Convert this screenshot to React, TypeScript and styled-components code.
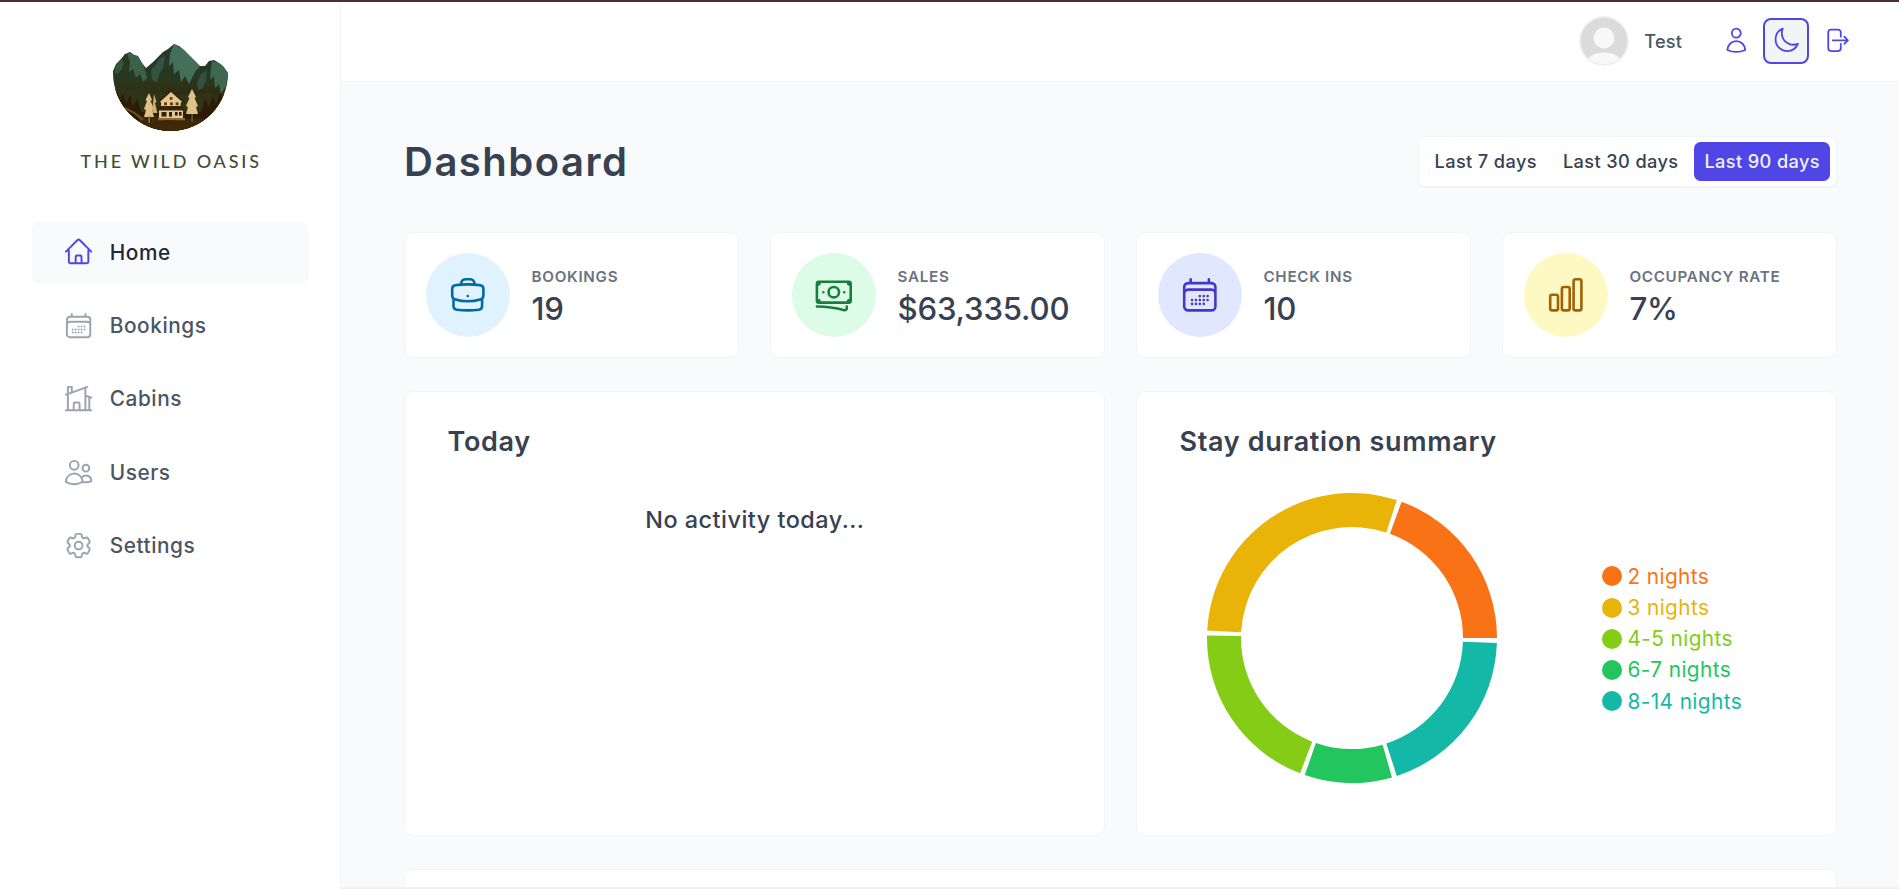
import React from "react";
import styled, { createGlobalStyle } from "styled-components";
import {
  HiOutlineHome,
  HiOutlineCalendarDays,
  HiOutlineHomeModern,
  HiOutlineUsers,
  HiOutlineCog6Tooth,
  HiOutlineBriefcase,
  HiOutlineBanknotes,
  HiOutlineChartBar,
  HiOutlineUser,
  HiOutlineMoon,
  HiOutlineArrowRightOnRectangle,
} from "react-icons/hi2";

const FONT = `Inter, "Noto Sans", "Liberation Sans", sans-serif`;

const Global = createGlobalStyle`
  * { box-sizing: border-box; margin: 0; padding: 0; }
  html, body { height: 100%; overflow: hidden; }
  body { font-family: ${FONT}; color: #374151; background: #fff; }
`;

const Shell = styled.div`
  height: 100vh;
  border-top: 2px solid #4a3038;
  display: grid;
  grid-template-columns: 341px 1fr;
  grid-template-rows: 80px 1fr;
  overflow: hidden;
`;

const Sidebar = styled.aside`
  grid-row: 1 / 3;
  background: #fff;
  border-right: 1.3px solid #f3f4f6;
  padding: 42px 31px 0 32px;
  display: flex;
  flex-direction: column;
  gap: 51.5px;
`;

const Brand = styled.div`
  display: flex;
  flex-direction: column;
  align-items: center;
  gap: 21px;
  svg { display: block; }
`;

const BrandName = styled.span`
  font-family: Lato, "Noto Sans", sans-serif;
  font-size: 18px;
  line-height: 16px;
  font-weight: 500;
  letter-spacing: 2.85px;
  margin-left: 1.5px;
  color: #3d5035;
  white-space: nowrap;
`;

const NavList = styled.nav`
  display: flex;
  flex-direction: column;
  gap: 10.4px;
`;

const NavLink = styled.a<{ $active?: boolean }>`
  display: flex;
  align-items: center;
  gap: 15.6px;
  height: 63px;
  padding: 0 31px;
  border-radius: 8px;
  background: ${(p) => (p.$active ? "#f9fafb" : "transparent")};
  color: ${(p) => (p.$active ? "#1f2937" : "#4b5563")};
  font-size: 20.8px;
  font-weight: 500;
  letter-spacing: 0.55px;
  svg {
    width: 31.2px;
    height: 31.2px;
    color: ${(p) => (p.$active ? "#4f46e5" : "#9ca3af")};
    flex: none;
  }
`;

const Header = styled.header`
  background: #fff;
  border-bottom: 1.3px solid #f3f4f6;
  padding: 0 40px 1.5px 0;
  display: flex;
  align-items: center;
  justify-content: flex-end;
  gap: 31.2px;
`;

const UserBox = styled.div`
  display: flex;
  align-items: center;
  gap: 15.6px;
  font-size: 18.2px;
  font-weight: 500;
  letter-spacing: 0.2px;
  color: #4b5563;
`;

const Avatar = styled.svg`
  width: 50px;
  height: 50px;
  display: block;
`;

const HeaderActions = styled.div`
  display: flex;
  align-items: center;
  gap: 4.4px;
`;

const IconButton = styled.button<{ $focus?: boolean }>`
  width: 45.6px;
  height: 45.6px;
  display: flex;
  align-items: center;
  justify-content: center;
  border: 2.6px solid ${(p) => (p.$focus ? "#4f46e5" : "transparent")};
  border-radius: 8px;
  background: ${(p) => (p.$focus ? "#f3f4f6" : "transparent")};
  svg {
    width: 28.6px;
    height: 28.6px;
    color: #4f46e5;
    flex: none;
  }
`;

const Main = styled.main`
  background: #f9fafb;
  border-bottom: 2px solid #f0f1f3;
  padding: 54.5px 62.4px 0 63px;
  display: flex;
  flex-direction: column;
  gap: 44.5px;
  overflow: hidden;
`;

const TitleRow = styled.div`
  display: flex;
  align-items: center;
  justify-content: space-between;
  height: 50.5px;
  flex: none;
`;

const Title = styled.h1`
  font-size: 40px;
  font-weight: 600;
  color: #374151;
  letter-spacing: 1.5px;
`;

const Filter = styled.div`
  display: flex;
  align-items: center;
  gap: 5.2px;
  height: 51px;
  padding: 0 5.2px;
  background: #fff;
  border: 1.3px solid #f3f4f6;
  border-radius: 7px;
  box-shadow: 0 1px 2px rgba(0, 0, 0, 0.04);
`;

const FilterButton = styled.button<{ $active?: boolean }>`
  height: 39px;
  padding: 0 10.4px 1px;
  border: none;
  border-radius: 6.5px;
  font-family: ${FONT};
  font-size: 18.2px;
  font-weight: 500;
  letter-spacing: 0.38px;
  background: ${(p) => (p.$active ? "#4f46e5" : "#fff")};
  color: ${(p) => (p.$active ? "#eef2ff" : "#374151")};
`;

const Dashboard = styled.div`
  display: grid;
  grid-template-columns: repeat(4, 1fr);
  grid-template-rows: 126.5px 445px 200px;
  gap: 33px 31.2px;
  flex: none;
`;

const Card = styled.section<{ $span?: number }>`
  background: #fff;
  border: 1.3px solid #f3f4f6;
  border-radius: 9px;
  grid-column: span ${(p) => p.$span ?? 1};
`;

const StatCard = styled(Card)`
  padding: 20.8px;
  display: flex;
  align-items: center;
  gap: 21.8px;
`;

const StatIcon = styled.div<{ $bg: string; $fg: string }>`
  width: 84px;
  height: 84px;
  border-radius: 50%;
  background: ${(p) => p.$bg};
  display: flex;
  align-items: center;
  justify-content: center;
  flex: none;
  svg {
    width: 41.6px;
    height: 41.6px;
    color: ${(p) => p.$fg};
  }
`;

const StatText = styled.div`
  display: flex;
  flex-direction: column;
  gap: 3px;
  padding-top: 4px;
`;

const StatLabel = styled.h5`
  font-size: 15.2px;
  line-height: 22px;
  font-weight: 600;
  letter-spacing: 0.7px;
  text-transform: uppercase;
  color: #6b7280;
`;

const StatValue = styled.p`
  font-size: 31.2px;
  line-height: 36px;
  font-weight: 500;
  letter-spacing: -0.2px;
  color: #374151;
`;

const PanelCard = styled(Card)`
  padding: 31px 41.6px 31px 42.6px;
  display: flex;
  flex-direction: column;
`;

const PanelTitle = styled.h2`
  font-size: 27px;
  line-height: 37px;
  font-weight: 600;
  letter-spacing: 0.67px;
  color: #374151;
`;

const EmptyText = styled.p`
  margin-top: 43px;
  text-align: center;
  font-size: 23.4px;
  line-height: 33px;
  font-weight: 500;
  letter-spacing: 0.5px;
  color: #374151;
`;

const ChartRow = styled.div`
  margin-top: 32px;
  display: flex;
  align-items: center;
  padding-left: 27px;
  gap: 104px;
`;

const Donut = styled.svg`
  width: 292px;
  height: 292px;
  display: block;
  flex: none;
`;

const Legend = styled.ul`
  list-style: none;
  display: flex;
  flex-direction: column;
  margin-top: 1.4px;
`;

const LegendItem = styled.li<{ $color: string }>`
  display: flex;
  align-items: center;
  gap: 5px;
  height: 31.2px;
  font-size: 20.8px;
  letter-spacing: 0.4px;
  color: ${(p) => p.$color};
  &::before {
    content: "";
    width: 20px;
    height: 20px;
    border-radius: 50%;
    background: ${(p) => p.$color};
    flex: none;
  }
`;

const sectors = [
  { label: "2 nights", color: "#f97316", from: 0, to: 70 },
  { label: "3 nights", color: "#eab308", from: 72, to: 177 },
  { label: "4-5 nights", color: "#84cc16", from: 179, to: 249 },
  { label: "6-7 nights", color: "#22c55e", from: 251, to: 286 },
  { label: "8-14 nights", color: "#14b8a6", from: 288, to: 358 },
];

function sectorPath(from: number, to: number, R: number, r: number, c: number) {
  const pt = (rad: number, deg: number) => {
    const a = (deg * Math.PI) / 180;
    return `${(c + rad * Math.cos(a)).toFixed(2)} ${(c - rad * Math.sin(a)).toFixed(2)}`;
  };
  const large = to - from > 180 ? 1 : 0;
  return `M${pt(R, from)} A${R} ${R} 0 ${large} 0 ${pt(R, to)} L${pt(r, to)} A${r} ${r} 0 ${large} 1 ${pt(r, from)} Z`;
}

const Logo = () => (
  <svg width="116" height="88" viewBox="0 0 116 88" aria-hidden="true">
    <defs>
      <linearGradient id="bowl" x1="0" y1="0" x2="0" y2="1">
        <stop offset="0" stopColor="#263a2a" />
        <stop offset="0.4" stopColor="#28381f" />
        <stop offset="0.62" stopColor="#35270c" />
        <stop offset="1" stopColor="#2a1604" />
      </linearGradient>
      <clipPath id="bowlClip">
        <path d="M0 27 L3 20 L8 15 L12 10 L17 8 L21 11 L25 12 L29 19 L33 24 L40 18 L45 13 L50 8 L55 5 L61 0 L66 2 L71 6 L76 11 L81 16 L87 22 L92 22 L96 17 L101 16 L106 19 L110 22 L115 29 A57.5 58 0 0 1 0 29 Z" />
      </clipPath>
    </defs>
    <g clipPath="url(#bowlClip)">
      <rect width="116" height="88" fill="url(#bowl)" />
      <path d="M14 9 L17 8 L25 12 L31 22 L34 34 L30 38 L27 30 L23 34 L20 25 L16 28 L17 18 Z" fill="#3c6148" />
      <path d="M3 21 L8 15 L11 18 L9 25 L5 30 L1 29 Z" fill="#35553f" />
      <path d="M61 0 L71 6 L81 16 L87 22 L82 28 L76 40 L72 32 L68 38 L66 26 L61 30 L60 18 L56 22 L57 10 Z" fill="#43705a" />
      <path d="M46 15 L52 12 L50 24 L46 30 L44 38 L39 36 L38 26 L42 22 Z" fill="#335340" />
      <path d="M99 17 L106 19 L110 22 L115 29 L113 42 L108 50 L106 40 L102 44 L101 32 L97 36 L98 24 Z" fill="#3f6850" />
      <path d="M88 30 L94 26 L93 36 L90 44 L85 46 L84 38 Z" fill="#31503d" />
      <path d="M0 46 L10 44 L20 46 L30 42 L38 50 L48 48 L58 52 L74 50 L84 52 L96 48 L106 54 L116 46 L116 88 L0 88 Z" fill="#2d3417" />
      <path d="M0 54 L4 47 L7 56 L10 49 L13 60 L17 51 L20 63 L24 55 L28 68 L88 68 L92 55 L96 63 L100 52 L103 61 L107 49 L110 56 L116 46 L116 88 L0 88 Z" fill="#2d1b05" />
      <path d="M24 72 L46 71 L52 78 L70 75 L92 75 L82 88 L30 88 Z" fill="#3f2808" />
      <path d="M11 64 Q22 68 30 76" stroke="#6b4e22" strokeWidth="2" fill="none" />
      <path d="M2 40 A56.5 57 0 0 0 114 40" fill="none" stroke="#6a4a1c" strokeWidth="1.4" transform="translate(0 3.5)" />
    </g>
    <path d="M36 49 L39 56 L37.5 57 L41 65 L39 66 L41 73 L31 73 L33 66 L31 65 L34 57 L32.5 56 Z" fill="#e0c288" />
    <path d="M41 50 L43.5 58 L42 59 L44.5 69 L39 69 Z" fill="#cfae70" />
    <rect x="35.5" y="72" width="1.4" height="7" fill="#8c7a56" />
    <path d="M79 45 L83 53 L81.5 54 L85 62 L83 63 L85 70 L73 70 L75 63 L73 62 L76.5 54 L75 53 Z" fill="#e0c288" />
    <rect x="78.4" y="70" width="1.4" height="8" fill="#6d5a36" />
    <path d="M46 58 L58 47 L70 58 L68 58 L67 65 L48 65 L48 58 Z" fill="#e6c88f" />
    <path d="M44.5 59 L58 47 L71.5 59" fill="none" stroke="#3a2408" strokeWidth="1.6" />
    <path d="M45 62 L70 62 L72 66.5 L43.5 66.5 Z" fill="#3a2408" />
    <rect x="46" y="66.5" width="24" height="8" fill="#e6c88f" />
    <rect x="45" y="74" width="27" height="2.2" fill="#8a6a35" />
    <rect x="48.5" y="68" width="5" height="4.6" fill="#33200a" />
    <rect x="56" y="68" width="3" height="4.6" fill="#33200a" />
    <rect x="62" y="68" width="2.6" height="3.6" fill="#33200a" />
    <rect x="66" y="68" width="2.6" height="3.6" fill="#33200a" />
    <rect x="51" y="58.4" width="3" height="2.8" fill="#5a3f17" />
    <rect x="56.8" y="53" width="2.6" height="2.8" fill="#5a3f17" />
    <rect x="57" y="58.4" width="3" height="2.8" fill="#5a3f17" />
    <rect x="62.6" y="58.4" width="3" height="2.8" fill="#5a3f17" />
  </svg>
);

const navItems = [
  { label: "Home", Icon: HiOutlineHome, active: true },
  { label: "Bookings", Icon: HiOutlineCalendarDays },
  { label: "Cabins", Icon: HiOutlineHomeModern },
  { label: "Users", Icon: HiOutlineUsers },
  { label: "Settings", Icon: HiOutlineCog6Tooth },
];

const stats = [
  { label: "Bookings", value: "19", Icon: HiOutlineBriefcase, bg: "#e0f2fe", fg: "#0369a1" },
  { label: "Sales", value: "$63,335.00", Icon: HiOutlineBanknotes, bg: "#dcfce7", fg: "#15803d" },
  { label: "Check ins", value: "10", Icon: HiOutlineCalendarDays, bg: "#e0e7ff", fg: "#4338ca" },
  { label: "Occupancy rate", value: "7%", Icon: HiOutlineChartBar, bg: "#fef9c3", fg: "#a16207" },
];

export default function App() {
  return (
    <>
      <Global />
      <Shell>
        <Sidebar>
          <Brand>
            <Logo />
            <BrandName>THE WILD OASIS</BrandName>
          </Brand>
          <NavList>
            {navItems.map(({ label, Icon, active }) => (
              <NavLink key={label} $active={active}>
                <Icon />
                <span>{label}</span>
              </NavLink>
            ))}
          </NavList>
        </Sidebar>
        <Header>
          <UserBox>
            <Avatar viewBox="0 0 50 50" aria-hidden="true">
              <defs>
                <clipPath id="avatarClip">
                  <circle cx="25" cy="25" r="23.4" />
                </clipPath>
              </defs>
              <circle cx="25" cy="25" r="25" fill="#f1f1f1" />
              <circle cx="25" cy="25" r="23.4" fill="#dbdbdb" />
              <g clipPath="url(#avatarClip)">
                <circle cx="25" cy="22" r="10.4" fill="#f8f8f8" />
                <ellipse cx="25" cy="49" rx="19" ry="12.4" fill="#f8f8f8" />
              </g>
            </Avatar>
            <span>Test</span>
          </UserBox>
          <HeaderActions>
            <IconButton>
              <HiOutlineUser />
            </IconButton>
            <IconButton $focus>
              <HiOutlineMoon />
            </IconButton>
            <IconButton>
              <HiOutlineArrowRightOnRectangle />
            </IconButton>
          </HeaderActions>
        </Header>
        <Main>
          <TitleRow>
            <Title>Dashboard</Title>
            <Filter>
              <FilterButton>Last 7 days</FilterButton>
              <FilterButton>Last 30 days</FilterButton>
              <FilterButton $active>Last 90 days</FilterButton>
            </Filter>
          </TitleRow>
          <Dashboard>
            {stats.map(({ label, value, Icon, bg, fg }) => (
              <StatCard key={label}>
                <StatIcon $bg={bg} $fg={fg}>
                  <Icon />
                </StatIcon>
                <StatText>
                  <StatLabel>{label}</StatLabel>
                  <StatValue>{value}</StatValue>
                </StatText>
              </StatCard>
            ))}
            <PanelCard $span={2}>
              <PanelTitle>Today</PanelTitle>
              <EmptyText>No activity today...</EmptyText>
            </PanelCard>
            <PanelCard $span={2}>
              <PanelTitle>Stay duration summary</PanelTitle>
              <ChartRow>
                <Donut viewBox="0 0 292 292" aria-hidden="true">
                  {sectors.map((s) => (
                    <path key={s.label} d={sectorPath(s.from, s.to, 145, 111, 146)} fill={s.color} />
                  ))}
                </Donut>
                <Legend>
                  {sectors.map((s) => (
                    <LegendItem key={s.label} $color={s.color}>
                      {s.label}
                    </LegendItem>
                  ))}
                </Legend>
              </ChartRow>
            </PanelCard>
            <Card $span={4} />
          </Dashboard>
        </Main>
      </Shell>
    </>
  );
}
